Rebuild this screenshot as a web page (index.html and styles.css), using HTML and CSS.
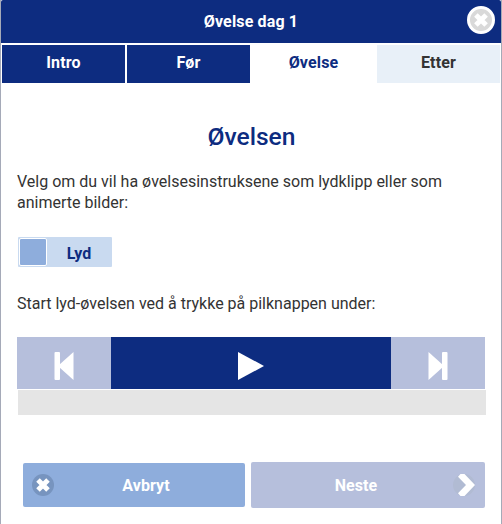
FILE: index.html
```html
<!DOCTYPE html>
<html lang="no">
<head>
<meta charset="utf-8">
<title>Øvelse dag 1</title>
<link rel="stylesheet" href="styles.css">
</head>
<body>
<main class="dialog">
  <header class="header">
    <h1 class="header-title">Øvelse dag 1</h1>
    <button class="close" aria-label="Lukk">
      <svg width="28" height="28" viewBox="0 0 28 28"><circle cx="14" cy="14" r="12.5" fill="#d9d9d9" stroke="#fff" stroke-width="3"/><path d="M8.9 8.9l10.2 10.2M19.1 8.9L8.9 19.1" stroke="#fff" stroke-width="5"/></svg>
    </button>
  </header>
  <nav class="tabs">
    <a class="tab">Intro</a>
    <a class="tab">Før</a>
    <a class="tab tab-active">Øvelse</a>
    <a class="tab tab-next">Etter</a>
  </nav>
  <section class="content">
    <h2 class="title">Øvelsen</h2>
    <p class="text">Velg om du vil ha øvelsesinstruksene som lydklipp eller som animerte bilder:</p>
    <div class="toggle"><span class="knob"></span><span class="toggle-label">Lyd</span></div>
    <p class="text">Start lyd-øvelsen ved å trykke på pilknappen under:</p>
    <div class="player">
      <button class="skip" aria-label="Forrige">
        <svg width="20" height="30" viewBox="0 0 20 30"><rect x="0.5" y="1" width="5.5" height="28" rx="1" fill="#fff"/><path d="M19.5 1v28L5 16v-2z" fill="#fff"/></svg>
      </button>
      <button class="play" aria-label="Spill av">
        <svg width="26" height="28" viewBox="0 0 26 28"><path d="M0 0v28l26-14z" fill="#fff"/></svg>
      </button>
      <button class="skip" aria-label="Neste spor">
        <svg width="20" height="30" viewBox="0 0 20 30"><rect x="14" y="1" width="5.5" height="28" rx="1" fill="#fff"/><path d="M.5 1v28L15 16v-2z" fill="#fff"/></svg>
      </button>
    </div>
    <div class="progress"></div>
  </section>
  <footer class="actions">
    <button class="action cancel">
      <svg class="cancel-icon" width="22" height="22" viewBox="0 0 22 22"><circle cx="11" cy="11" r="11" fill="#7794bf"/><path d="M6 6l10 10M16 6L6 16" stroke="#fff" stroke-width="5"/></svg>
      <span>Avbryt</span>
    </button>
    <button class="action next">
      <span>Neste</span>
      <svg class="next-icon" width="22" height="22" viewBox="0 0 22 22"><circle cx="11" cy="11" r="11" fill="#b1bbd3"/><path d="M5 2.8L7.5 0H11.5L22 11 11.5 22H7.5L5 19.2 13 11z" fill="#fff"/></svg>
    </button>
  </footer>
</main>
</body>
</html>
```

FILE: styles.css
```css
* { box-sizing: border-box; }
body {
  margin: 0;
  background: #fff;
  color: #333;
  font: 16px/21px Roboto, "Liberation Sans", sans-serif;
}
button {
  border: 0;
  padding: 0;
  font: inherit;
}
svg { display: block; }
.dialog {
  width: 502px;
  height: 524px;
  overflow: hidden;
  border: solid #a5aab8;
  border-width: 0 1px;
}
.header {
  position: relative;
  height: 43px;
  background: #0d2c80;
  border-radius: 2px 2px 0 0;
}
.header-title {
  margin: 0;
  color: #fff;
  font-size: 16px;
  line-height: 44px;
  font-weight: 700;
  letter-spacing: 0.15px;
  text-align: center;
}
.close {
  position: absolute;
  top: 6px;
  right: 6px;
  background: none;
}
.tabs {
  display: grid;
  grid-template-columns: repeat(4, 123px);
  column-gap: 2px;
  padding: 2px 0 0 1px;
}
.tab {
  height: 38px;
  line-height: 36px;
  background: #0d2c80;
  color: #fff;
  font-weight: 700;
  letter-spacing: 0.15px;
  text-align: center;
}
.tab-active { background: #fff; color: #0d2c80; }
.tab-next { background: #e8f0f8; color: #333; }
.content { padding: 39px 15px 0 16px; }
.title {
  margin: 0 0 19px;
  color: #0d2c80;
  font-size: 24.6px;
  line-height: 30px;
  font-weight: 500;
  text-align: center;
}
.text { margin: 0; }
.toggle {
  display: flex;
  width: 94px;
  height: 30px;
  margin: 24px 0 26px 1px;
  padding: 1px;
  background: #c9daf0;
  border-radius: 1px;
}
.knob {
  width: 28px;
  height: 28px;
  background: #8eaddc;
  border: 1px solid #fff;
  border-radius: 2px;
}
.toggle-label {
  flex: 1;
  color: #0d2c80;
  font-weight: 700;
  line-height: 31px;
  text-align: center;
}
.player { display: flex; height: 52px; margin-top: 23px; }
.skip, .play {
  display: flex;
  align-items: center;
  justify-content: center;
}
.skip { width: 94px; padding-top: 5px; background: #b6bfdc; }
.play { width: 280px; padding-top: 5px; background: #0d2c80; }
.progress { width: 468px; height: 25px; margin: 1px 0 0 1px; background: #e5e5e5; }
.actions {
  display: flex;
  align-items: center;
  gap: 6px;
  padding: 47px 0 0 22px;
}
.action {
  position: relative;
  border-radius: 2px;
  color: #fff;
  font-weight: 700;
  letter-spacing: 0.1px;
}
.cancel { width: 222px; height: 44px; padding-left: 24px; background: #8eaddc; }
.next { width: 234px; height: 46px; padding-right: 24px; background: #b6bfdc; }
.cancel-icon { position: absolute; left: 9px; top: 11px; }
.next-icon { position: absolute; right: 10px; top: 12px; }
```
